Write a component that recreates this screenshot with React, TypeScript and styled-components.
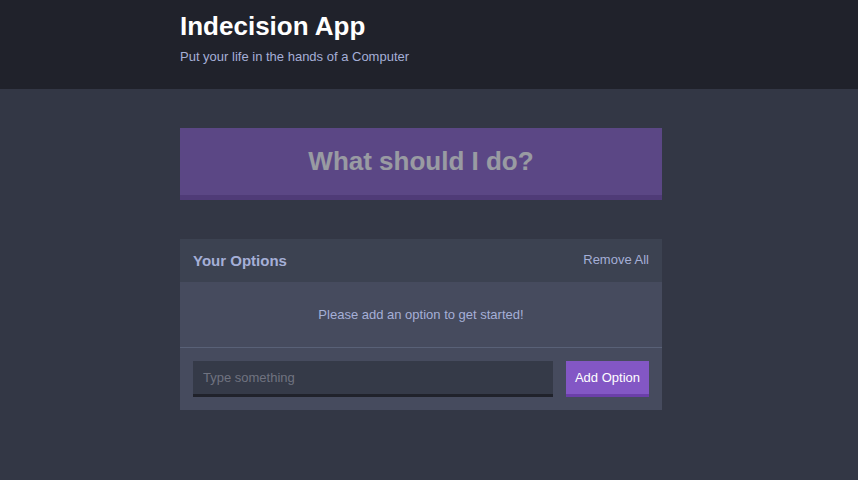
import React, { useState } from 'react';
import styled, { createGlobalStyle } from 'styled-components';

const GlobalStyle = createGlobalStyle`
  html, body {
    margin: 0;
    padding: 0;
    background: #333745;
    font-family: "Liberation Sans", Arial, sans-serif;
  }
  * { box-sizing: border-box; }
`;

const Page = styled.div`
  min-height: 480px;
  background: #333745;
`;

const HeaderBar = styled.header`
  background: #20222b;
  height: 89px;
  padding-right: 16px;
`;

// content column, offset like the original (scrollbar took 16px)
const Container = styled.div`
  max-width: 482px;
  margin: 0 auto;
`;

const Body = styled.main`
  padding: 39px 16px 0 0;
`;

const Title = styled.h1`
  margin: 0;
  padding-top: 11px;
  color: #ffffff;
  font-size: 26px;
  font-weight: bold;
  line-height: 30px;
`;

const Subtitle = styled.h2`
  margin: 8px 0 0;
  color: #a5afd7;
  font-size: 13px;
  font-weight: normal;
  line-height: 16px;
`;

const BigButton = styled.button`
  display: block;
  width: 100%;
  height: 72px;
  margin: 0 0 39px;
  padding: 0;
  border: none;
  border-bottom: 5px solid #6b3fa9;
  background: #8357c5;
  color: #ffffff;
  font-family: inherit;
  font-size: 26px;
  font-weight: bold;
  opacity: 0.5;
  cursor: ${p => (p.disabled ? 'default' : 'pointer')};
`;

const Widget = styled.section`
  background: #464b5e;
`;

const WidgetHeader = styled.div`
  display: flex;
  align-items: center;
  justify-content: space-between;
  height: 43px;
  padding: 0 13px;
  background: #3c4251;
`;

const WidgetTitle = styled.h3`
  margin: 0;
  color: #a5afd7;
  font-size: 15px;
  font-weight: bold;
`;

const LinkButton = styled.button`
  border: none;
  background: none;
  padding: 0;
  color: #a5afd7;
  font-family: inherit;
  font-size: 13px;
  cursor: pointer;
  margin-top: -2px;
`;

const Message = styled.p`
  margin: 0;
  height: 66px;
  display: flex;
  align-items: center;
  justify-content: center;
  color: #a5afd7;
  font-size: 13px;
  border-bottom: 1px solid #596177;
`;

const Form = styled.form`
  display: flex;
  gap: 13px;
  padding: 13px;
  height: 62px;
`;

const Input = styled.input`
  flex: 1;
  height: 36px;
  border: none;
  border-bottom: 3px solid #20222b;
  background: #353a48;
  color: #a5afd7;
  padding: 0 10px;
  font-family: inherit;
  font-size: 13px;
  outline: none;

  &::placeholder {
    color: #707380;
  }
`;

const Button = styled.button`
  height: 36px;
  padding: 0 9px;
  border: none;
  border-bottom: 3px solid #6b3fa9;
  background: #8357c5;
  color: #ffffff;
  font-family: inherit;
  font-size: 13px;
  cursor: pointer;
`;

export default function App() {
  const [options, setOptions] = useState<string[]>([]);
  const [text, setText] = useState('');

  const addOption = (e: React.FormEvent) => {
    e.preventDefault();
    const value = text.trim();
    if (value && !options.includes(value)) {
      setOptions([...options, value]);
      setText('');
    }
  };

  return (
    <>
      <GlobalStyle />
      <Page>
        <HeaderBar>
          <Container>
            <Title>Indecision App</Title>
            <Subtitle>Put your life in the hands of a Computer</Subtitle>
          </Container>
        </HeaderBar>
        <Body>
          <Container>
            <BigButton disabled={options.length === 0}>What should I do?</BigButton>
            <Widget>
              <WidgetHeader>
                <WidgetTitle>Your Options</WidgetTitle>
                <LinkButton onClick={() => setOptions([])}>Remove All</LinkButton>
              </WidgetHeader>
              {options.length === 0 ? (
                <Message>Please add an option to get started!</Message>
              ) : (
                options.map(o => <Message key={o}>{o}</Message>)
              )}
              <Form onSubmit={addOption}>
                <Input
                  placeholder="Type something"
                  value={text}
                  onChange={e => setText(e.target.value)}
                />
                <Button type="submit">Add Option</Button>
              </Form>
            </Widget>
          </Container>
        </Body>
      </Page>
    </>
  );
}
